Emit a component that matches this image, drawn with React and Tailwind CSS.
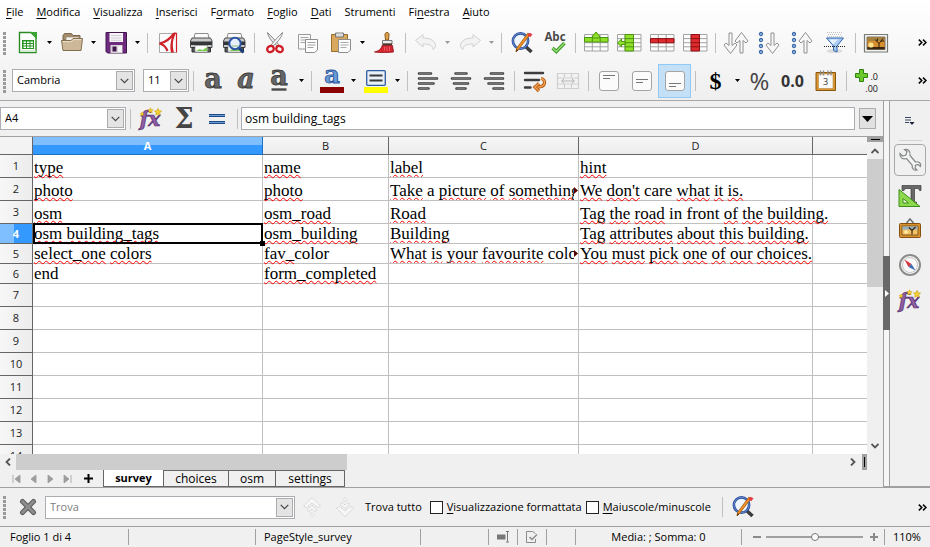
import React from "react";

/* ---------- drawing helpers ---------- */

function Svg({ children, className = "h-6 w-6", box = "0 0 24 24" }) {
  return (
    <svg viewBox={box} className={`shrink-0 overflow-visible ${className}`} fill="none" aria-hidden="true">
      {children}
    </svg>
  );
}

const Calc = () => (
  <Svg>
    <path d="M3.500 1.500H15l5 5v15H3.500z" fill="#fff" stroke="#2c8a27" strokeWidth="1.400" />
    <path d="M4.500 19h15v2h-15z" fill="#d6ecd2" />
    <path d="M14 1h7v7z" fill="#3aa535" />
    <path d="M6 9h12v9H6z" fill="#24951f" />
    <path d="M7.500 10.500h2.500v1.600H7.500zM11 10.500h2.500v1.600H11zM14.500 10.500H17v1.600h-2.500zM7.500 13h2.500v1.500H7.500zM11 13h2.500v1.500H11zM14.500 13H17v1.500h-2.500zM7.500 15.400h2.500V17H7.500zM11 15.400h2.500V17H11zM14.500 15.400H17V17h-2.500z" fill="#fff" />
  </Svg>
);
const Folder = () => (
  <Svg>
    <path d="M3 4.500 4.500 2.500h7L13 4.500h7V9H3z" fill="#a48d6c" stroke="#7c684d" />
    <path d="M6 6h13v4H6z" fill="#f6f3ee" stroke="#9b8a72" strokeWidth=".7" />
    <path d="M1.500 9.500H11l2-2h9.500L21 19.500H3z" fill="#cdb999" stroke="#84704f" />
    <path d="M2.800 10.600h8.800l2-2h7.700" stroke="#eadfc9" />
  </Svg>
);
const Save = () => (
  <Svg>
    <path d="M2 1.500h20.500v20.500H3.500L2 20.500z" fill="#6c2b7c" stroke="#42154e" />
    <path d="M5.500 2h13.500v9H5.500z" fill="#f7f5f8" />
    <path d="M7 4.500h10.500M7 7h10.500M7 9.300h10.500" stroke="#c7c3ca" strokeWidth=".8" />
    <path d="M6.500 14h12v8h-12z" fill="#d9d6da" />
    <path d="M8.500 15.500h4v5h-4z" fill="#42154e" />
    <path d="M14 15h4v6h-4z" fill="#f4f4f4" />
  </Svg>
);
const Pdf = () => (
  <Svg>
    <path d="M3.500 2.500h17v19h-17z" fill="#fbfbfb" stroke="#a9a9a9" />
    <path d="M18 2.500C14 8 9 11.500 3.500 12.500c4 1 6.500 3.500 8 7.500" stroke="#cf2027" strokeWidth="2.200" />
    <path d="M20.500 1.500c-4 6-4.500 13-2.500 20h-3c-1.500-7 0-14 3-20z" fill="#cf2027" />
    <path d="M20.500 2v19.500" stroke="#cf2027" strokeWidth="1.200" />
  </Svg>
);
const PrinterShape = () => (
  <>
    <path d="M6 2.500h13l1 5H5z" fill="#fbfbfb" stroke="#8d8d8d" />
    <path d="M3 7h18.500l1.500 3v6.500H1.500V10z" fill="#c9c9c9" stroke="#4e4e4e" />
    <path d="M1.500 10.500H23v3.500H1.500z" fill="#34373a" />
    <path d="M3 16.500h18.500v4.500H3z" fill="#55595c" stroke="#2e3133" />
    <path d="M6 14.500h12.500v6.500H6z" fill="#fdfdfd" stroke="#7b7b7b" strokeWidth=".6" />
    <path d="m7 20 3.500-2 3 1 4.500-3v4z" fill="#7ccf4d" />
  </>
);
const Print = () => <Svg><PrinterShape /></Svg>;
const Preview = () => (
  <Svg>
    <PrinterShape />
    <path d="m16.500 16.500 5 5" stroke="#1c3e7d" strokeWidth="2.600" />
    <circle cx="13" cy="12.500" r="5.700" fill="#e6f0fa" stroke="#2d55a5" strokeWidth="2" />
    <path d="M9.500 15h7" stroke="#8abf7c" />
  </Svg>
);
const Scissors = () => (
  <Svg>
    <path d="M4.500 1.500c.500 4 4 9 9.500 13.500l1.500-1.500C12 9 8 5 4.500 1.500z" fill="#e6e6e6" stroke="#7d7d7d" strokeWidth=".9" />
    <path d="M19.500 1.500c-.5 4-4 9-9.500 13.500l-1.500-1.500C12 9 16 5 19.500 1.500z" fill="#f6f6f6" stroke="#7d7d7d" strokeWidth=".9" />
    <ellipse cx="7.500" cy="18" rx="3.400" ry="3" stroke="#cf1b24" strokeWidth="2.300" transform="rotate(-30 7.500 18)" />
    <ellipse cx="16.500" cy="18" rx="3.400" ry="3" stroke="#cf1b24" strokeWidth="2.300" transform="rotate(30 16.500 18)" />
  </Svg>
);
const Copy = () => (
  <Svg>
    <path d="M2.500 3.500h12v12l-2 2.500h-10z" fill="#fafafa" stroke="#9b9b9b" />
    <path d="M4.500 6.500h8M4.500 9h8M4.500 11.500h8" stroke="#a8a8a8" />
    <path d="M9.500 8.500h12V19l-3 2.500h-9z" fill="#fff" stroke="#8d8d8d" />
    <path d="M11.500 11.500h8M11.500 14h8M11.500 16.500h6" stroke="#a0a0a0" />
  </Svg>
);
const Paste = () => (
  <Svg>
    <path d="M2.500 3.500h16v17h-16z" fill="#d9a85c" stroke="#9a6e2c" />
    <path d="M6.500 2h8v4h-8z" fill="#dcdcdc" stroke="#777" />
    <path d="M8.500 1h4v2h-4z" fill="#bcbcbc" />
    <path d="M9.500 8.500h12V19l-2.500 2.500H9.500z" fill="#fbfbfb" stroke="#8c8c8c" />
    <path d="M11.500 11.500h8M11.500 14h8M11.500 16.500h6" stroke="#aaa" />
  </Svg>
);
const Brush = () => (
  <Svg>
    <path d="M14 1.500c1.500 0 2.200 1.200 2 2.500L15.500 9h-3L12 4c-.2-1.300.5-2.500 2-2.500z" fill="#dfa04a" stroke="#8b5a1b" />
    <path d="M9.500 9.500h9.500v3.500H9.500z" fill="#ececec" stroke="#777" />
    <path d="M9.500 12.500H19v1.800H9.500z" fill="#4b3b2b" />
    <path d="M9 14.500h10.500l1 6.500c-6 .5-12 1-19 0 4-1 7-3 7.500-6.500z" fill="#d5242e" stroke="#8b1219" strokeWidth=".8" />
    <path d="M11.500 15.500v4M14 15.500v4.500M16.500 15.500v4.500" stroke="#ef6b72" strokeWidth=".8" />
  </Svg>
);
const UndoPath = () => <path d="M1.500 9.500 9 3.500v3.500c7 0 12.500 2.500 12.500 8-.5 2-1.500 3-2.500 3.500 0-3.500-3.500-5.500-10-5.500v3z" fill="#f3f3f3" stroke="#d2d2d2" />;
const Undo = () => <Svg><UndoPath /></Svg>;
const Redo = () => (
  <Svg>
    <g transform="matrix(-1 0 0 1 24 0)"><UndoPath /></g>
  </Svg>
);
const FindReplace = () => (
  <Svg>
    <path d="m15 15 6.500 6" stroke="#3c3c3c" strokeWidth="3.600" />
    <circle cx="10.500" cy="10" r="7.600" fill="#eef5fc" stroke="#2b4f9e" strokeWidth="2.600" />
    <circle cx="10.500" cy="10" r="7.600" stroke="#7ea3dd" strokeWidth=".7" />
    <path d="M20 3.500 8.500 18.500 6 21l.7-3.800L17.800 2.200z" fill="#f2942a" stroke="#a85a10" strokeWidth=".9" />
    <path d="m17.500 4.500 2-2.800 3 1.600-2.200 3z" fill="#e33b45" />
    <path d="m6 21 .7-3 1.600 1.200z" fill="#4a2b0c" />
  </Svg>
);
const Spell = () => (
  <Svg>
    <text x="12" y="10" fontSize="11.500" textAnchor="middle" fontWeight="700" fill="#4a4a4a" fontFamily="'Open Sans', sans-serif">Abc</text>
    <path d="m9.500 17 3.800 3.500L21.500 12" stroke="#3f9a2a" strokeWidth="3.400" />
    <path d="m9.500 17 3.800 3.500L21.500 12" stroke="#93dc74" strokeWidth="1.400" />
  </Svg>
);
function GridBase() {
  return (
    <path d="M.5 3.500h23.500v16.500H.5zM.5 7.600H24M.5 11.700H24M.5 15.800H24M8.300 3.500V20M16.200 3.500V20" fill="#fdfdfd" stroke="#a3a3a3" />
  );
}
const RowIns = () => (
  <Svg>
    <GridBase />
    <path d="M.5 6.500H24V11H.5z" fill="#8fdf2b" stroke="#4a9410" />
    <path d="m12 1 3.500 4v2h-7V5z" fill="#8fdf2b" stroke="#4a9410" />
    <path d="M8.300 7v4M16.200 7v4" stroke="#4a9410" />
  </Svg>
);
const ColIns = () => (
  <Svg>
    <GridBase />
    <path d="M8 3.500h8.500V20H8z" fill="#8fdf2b" stroke="#4a9410" />
    <path d="m.5 12 4-4v2.500H8v3H4.500V16z" fill="#8fdf2b" stroke="#4a9410" />
    <path d="M8 7.600h8.500M8 11.700h8.500M8 15.800h8.500" stroke="#4a9410" />
  </Svg>
);
const RowDel = () => (
  <Svg>
    <GridBase />
    <path d="M.5 7.600H24v4.200H.5z" fill="#df2a2f" stroke="#8e1013" />
    <path d="M8.300 7.600v4M16.200 7.600v4" stroke="#8e1013" />
  </Svg>
);
const ColDel = () => (
  <Svg>
    <GridBase />
    <path d="M8 3.500h8.500V20H8z" fill="#df2a2f" stroke="#8e1013" />
    <path d="M8 7.600h8.500M8 11.700h8.500M8 15.800h8.500" stroke="#8e1013" />
  </Svg>
);
const downArrow = "M-1.500 0h3v12.500l3-2.500 2 2L0 20.500-6.500 12l2-2 3 2.500z";
const upArrow = "M-1.500 20.500h3V8l3 2.500 2-2L0 0l-6.500 8.500 2 2 3-2.500z";
const Sort = () => (
  <Svg>
    <path d={downArrow} transform="translate(6.500 2)" fill="#f8f8f8" stroke="#909090" />
    <path d={upArrow} transform="translate(17.500 1.500)" fill="#f8f8f8" stroke="#909090" />
  </Svg>
);
function Dots() {
  return (
    <g fill="#dce8f8" stroke="#3566a8" strokeWidth="1.300">
      <circle cx="4" cy="3" r="1.500" /><circle cx="4" cy="9" r="1.500" />
      <circle cx="4" cy="15" r="1.500" /><circle cx="4" cy="21" r="1.500" />
    </g>
  );
}
const SortAsc = () => <Svg><Dots /><path d={downArrow} transform="translate(15.500 2)" fill="#f8f8f8" stroke="#909090" /></Svg>;
const SortDesc = () => <Svg><Dots /><path d={upArrow} transform="translate(15.500 1.500)" fill="#f8f8f8" stroke="#909090" /></Svg>;
const Funnel = () => (
  <Svg>
    <path d="M4 1.500h15M5 3.500h14M4 5.500h15" stroke="#c2c2c2" strokeDasharray="1 1" />
    <ellipse cx="11.500" cy="20" rx="8" ry="2" fill="#dcdcdc" />
    <path d="M3.500 7h17l-6.500 8v6l-3.500-1.500V15z" fill="#a9cdf3" stroke="#2f66ac" />
    <path d="M6 8.500h9l-5 5z" fill="#e9f3fd" />
    <path d="M1 15.500h22" stroke="#222" strokeDasharray="1 1" />
  </Svg>
);
const PictureIcon = () => (
  <Svg>
    <path d="M.5 3.500h23v17.500H.5z" fill="#f4f4f2" stroke="#777a75" strokeWidth="1.200" />
    <path d="M3 6h18v12.500H3z" fill="#d78e2e" stroke="#555" strokeWidth=".8" />
    <path d="M3.400 6.400h17.200v3.600H3.400z" fill="#a5823e" />
    <path d="M3.400 16h17.200v2.200H3.400z" fill="#3b2510" />
    <circle cx="7" cy="14" r="2.600" fill="#ffe38a" />
    <path d="M15 17.500v-5l-4-4M15 12.500l4-5M17 10l3 0M13 10.500l.5-3" stroke="#2a1b0b" strokeWidth="1" />
  </Svg>
);

function LetterA({ variant }) {
  const italic = variant === "italic";
  return (
    <Svg>
      <text x="11" y={variant === "under" ? 16 : 19} fontSize="27" textAnchor="middle" fontWeight="700" fontStyle={italic ? "italic" : "normal"} fill="#666" stroke="#3a3a3a" strokeWidth=".8" fontFamily="'DejaVu Serif', serif">a</text>
      {variant === "under" && <path d="M3.500 20.500h15" stroke="#4a4a4a" strokeWidth="2.400" />}
    </Svg>
  );
}
const FontColor = () => (
  <Svg className="h-7 w-6" box="0 0 24 28">
    <text x="12" y="16" fontSize="24" textAnchor="middle" fontWeight="700" fill="#6a9bd8" stroke="#27549b" strokeWidth=".9" fontFamily="'DejaVu Serif', serif">a</text>
    <path d="M0 20h24v6H0z" fill="#8b0000" />
  </Svg>
);
const Highlight = () => (
  <Svg className="h-7 w-6" box="0 0 24 28">
    <rect x="2.700" y="3.700" width="18.600" height="14.600" rx="1" fill="#e8f0fa" stroke="#2f5c9f" strokeWidth="1.300" />
    <path d="M5.500 8.500h13M5.500 13.500h13" stroke="#3a3a3a" strokeWidth="2.200" />
    <path d="M0 20h24v6H0z" fill="#ffff00" />
  </Svg>
);
function Align({ d }) {
  return (
    <Svg>
      <path d={d} stroke="#3d3d3d" strokeWidth="2.600" strokeLinecap="round" />
      <path d={d} stroke="#8b8b8b" strokeWidth=".7" />
    </Svg>
  );
}
const AlignL = () => <Align d="M3 4.500h12M3 9.500h18M3 14.500h14.500M3 19.500h9.500" />;
const AlignC = () => <Align d="M6.500 4.500h11M3 9.500h18M5 14.500h14M7.500 19.500h9" />;
const AlignR = () => <Align d="M9 4.500h12M3 9.500h18M6.500 14.500H21M11.500 19.500H21" />;
const Wrap = () => (
  <Svg>
    <path d="M2 4h18M2 11h14M2 18.500h5.500" stroke="#3d3d3d" strokeWidth="2.400" strokeLinecap="round" />
    <path d="M18 9.500c5 1 5.500 8.500-3.500 8.500M16 14.500 12 18l4 4" stroke="#b4570f" strokeWidth="3.200" />
    <path d="M18 9.500c5 1 5.500 8.500-3.500 8.500M16 14.500 12 18l4 4" stroke="#f5a456" strokeWidth="1.400" />
  </Svg>
);
const Merge = () => (
  <Svg>
    <path d="M1.500 4.500h21v15h-21zM1.500 9h21M1.500 15h21M8.500 4.500V9M15.500 4.500V9M8.500 15v4.500M15.500 15v4.500" fill="#f2f2f2" stroke="#cfcfcf" strokeWidth="1.200" />
    <path d="M6 12h12M8 10l-2.500 2L8 14M16 10l2.500 2-2.500 2" stroke="#b4b4b4" />
  </Svg>
);
function Valign({ y }) {
  return (
    <Svg>
      <rect x="2.500" y="2.500" width="19" height="19" rx="2.500" fill="#fbfbfb" stroke="#a4a4a4" />
      <path d={`M6 ${y}h12M6 ${y + 3}h7`} stroke="#777" />
    </Svg>
  );
}
const CalendarIcon = () => (
  <Svg>
    <path d="M2 3.500h19.500v18H2z" fill="#d9952f" stroke="#8a5710" />
    <path d="M4.500 5h14.500v14.500H4.500z" fill="#fafafa" stroke="#b98a44" strokeWidth=".6" />
    <path d="M6.500 1.500v5M9.500 1.500v5M14 1.500v5M17 1.500v5" stroke="#8c8c8c" strokeWidth="1.300" />
    <text x="11.500" y="16" fontSize="9" textAnchor="middle" fill="#333" fontFamily="'Open Sans', sans-serif">3</text>
  </Svg>
);
const AddDecimal = () => (
  <Svg>
    <path d="M4.500.5h4v4h4v4h-4v4h-4v-4h-4v-4h4z" fill="#6bc92b" stroke="#2f8411" />
    <text x="23" y="11" fontSize="9" textAnchor="end" fill="#111" fontFamily="'Open Sans', sans-serif">.0</text>
    <text x="23" y="23" fontSize="9" textAnchor="end" fill="#111" fontFamily="'Open Sans', sans-serif">.00</text>
  </Svg>
);
const star = "m0-3 .9 2 2.100.2-1.600 1.400.5 2.100L0 1.600l-1.900 1.100.5-2.100L-3-.8l2.100-.2z";
const Fx = () => (
  <Svg>
    <text x="11" y="19" fontSize="20" textAnchor="middle" fontWeight="700" fontStyle="italic" fill="#8d5fa3" stroke="#54296b" strokeWidth=".7" fontFamily="'DejaVu Serif', serif">fx</text>
    <path d={star} transform="translate(3 7) scale(.7)" fill="#f6d331" stroke="#c99b0c" strokeWidth=".5" />
    <path d={star} transform="translate(11.500 3.500) scale(.9)" fill="#f6d331" stroke="#c99b0c" strokeWidth=".5" />
    <path d={star} transform="translate(19 5) scale(1.200)" fill="#f6d331" stroke="#c99b0c" strokeWidth=".5" />
  </Svg>
);
const Sigma = () => (
  <Svg>
    <text x="12" y="21" fontSize="27" textAnchor="middle" fontWeight="700" fill="#454545" fontFamily="'DejaVu Serif', serif">Σ</text>
  </Svg>
);
const Equals = () => (
  <Svg>
    <path d="M4 8.500h16M4 15.500h16" stroke="#1f4a86" strokeWidth="3" />
    <path d="M4 8.500h16M4 15.500h16" stroke="#6b9bd6" strokeWidth="1.200" />
  </Svg>
);
const WrenchIcon = () => (
  <Svg>
    <path d="M2 5.500 4.500 8 8 7l1-3.500L6.500 1.500c3-.8 6.500 1.500 5.500 6l5.500 6.500c3.500-1 6 1.500 5 4.500l-2.500-2-2.500.8-.5 2.700 2 2c-3 .8-5.500-1.500-4.700-4.700L8.500 10.500C4.500 12 1.500 9 2 5.500z" fill="#f4f4f2" stroke="#85888a" strokeWidth="1.200" />
  </Svg>
);
const Styles = () => (
  <Svg>
    <path d="M4 1.500h19v5h-1.500l-1-2h-4V18h2v2H11v-2h2V4.500H7l-1 2H4z" fill="#686868" stroke="#3e3e3e" strokeWidth=".7" />
    <path d="M1 5.500 22 22.500H1z" fill="#8dd94e" stroke="#3e8d16" />
    <path d="M5 14.500 10.500 19H5z" fill="#eef8e6" stroke="#3e8d16" />
  </Svg>
);
const Gallery = () => (
  <Svg>
    <path d="m8.500 6 3.500-4 3.500 4" stroke="#6f6f6f" strokeWidth="1.500" />
    <rect x="1.500" y="6.500" width="21" height="14" rx="1" fill="#d9922f" stroke="#84500f" />
    <path d="M4 9h16v9H4z" fill="#f3c266" stroke="#5d3a0a" strokeWidth=".7" />
    <path d="M4.500 9.500h15v3h-15z" fill="#8fb0c6" />
    <path d="M14 17.500v-4l-3-3M14 13.500l3.500-3.500" stroke="#3b2308" strokeWidth="1.200" />
    <circle cx="8" cy="15" r="1.800" fill="#fff0a6" />
  </Svg>
);
const Compass = () => (
  <Svg>
    <circle cx="12" cy="12" r="10" fill="#fafafa" stroke="#8b8d8a" strokeWidth="2" />
    <circle cx="12" cy="12" r="7.500" stroke="#c2c4c0" />
    <path d="m6.500 6.500 7 4.500-3 3z" fill="#d6353c" />
    <path d="m17.500 17.500-4-6.500-3 3z" fill="#3f6db5" />
  </Svg>
);
const Cross = () => (
  <Svg className="h-5 w-5" box="0 0 20 20">
    <path d="m4.500 4.500 11 11m0-11-11 11" stroke="#5f5f5f" strokeWidth="5" strokeLinecap="round" />
    <path d="m4.500 4.500 11 11m0-11-11 11" stroke="#8d8d8d" strokeWidth="2.800" strokeLinecap="round" />
  </Svg>
);
const FindArrow = () => (
  <path d="m12 2.500 8.500 8.500-3 1.500L12 8l-5.500 4.500-3-1.500zM12 10.500l5 4.500-2 1.500-3-2.500-3 2.500L7 15zM12 17.500l2 2-2 2-2-2z" fill="#f7f7f7" stroke="#cecece" strokeDasharray="1.500 .7" />
);
const FindUp = () => <Svg><FindArrow /></Svg>;
const FindDown = () => <Svg><g transform="matrix(1 0 0 -1 0 24)"><FindArrow /></g></Svg>;

/* ---------- small controls ---------- */

const Grip = () => (
  <span className="flex h-6 w-[11px] shrink-0 items-center pl-[3px]" aria-hidden="true">
    <svg className="h-6 w-[3px]" viewBox="0 0 3 24"><path d="M1.500 1v23" stroke="#9a9a9a" strokeWidth="3" strokeDasharray="3 1" /></svg>
  </span>
);
const Sep = () => (
  <span className="flex w-2 shrink-0 justify-center" aria-hidden="true"><span className="h-5 w-px bg-[#c0c0c0]" /></span>
);
function Tool({ label, children, active }) {
  return (
    <button type="button" aria-label={label} className={`flex h-[34px] w-[33px] shrink-0 items-center justify-center border ${active ? "border-[#90c8f6] bg-[#c4e0f6]" : "border-transparent"}`}>
      {children}
    </button>
  );
}
function Drop({ label, dim }) {
  return (
    <button type="button" aria-label={label} className="flex h-[34px] w-[11px] shrink-0 items-center justify-center">
      <svg className="h-[3px] w-[5px]" viewBox="0 0 5 3"><path d="M0 0h5L2.500 3z" fill={dim ? "#9a9a9a" : "#000"} /></svg>
    </button>
  );
}
function Combo({ label, value, className, dim }) {
  return (
    <div className={`flex h-[23px] shrink-0 items-stretch border border-[#abadb3] bg-white p-px ${className}`}>
      <select aria-label={label} defaultValue={value} className={`min-w-0 flex-1 appearance-none bg-transparent pl-[3px] outline-none ${dim ? "text-[#7d7d7d]" : ""}`}>
        <option>{value}</option>
      </select>
      <span className="flex w-[17px] items-center justify-center border border-[#acacac] bg-[#e4e4e4]" aria-hidden="true">
        <svg className="h-[6px] w-[9px]" viewBox="0 0 9 6"><path d="m.7.8 3.800 3.800L8.300.8" fill="none" stroke="#444" strokeWidth="1.200" /></svg>
      </span>
    </div>
  );
}
const Chevrons = () => (
  <button type="button" aria-label="Altri comandi" className="ml-auto flex h-6 w-4 shrink-0 items-center justify-center">
    <svg className="h-[7px] w-[9px]" viewBox="0 0 9 7"><path d="m.8.600 3 2.900-3 2.900M5 .6l3 2.900-3 2.900" fill="none" stroke="#000" strokeWidth="1.500" /></svg>
  </button>
);
function ScrollArrow({ d, label, className }) {
  return (
    <button type="button" aria-label={label} className={`flex shrink-0 items-center justify-center ${className}`}>
      <svg className="h-2 w-2" viewBox="0 0 8 8"><path d={d} fill="none" stroke="#555" strokeWidth="1.800" /></svg>
    </button>
  );
}

/* ---------- sheet data ---------- */

// Words wrapped in [ ] carry the spelling mark.
const rows = [
  { h: "h-[23px]", cells: ["[type]", "[name]", "[label]", "[hint]"] },
  { h: "h-[23px]", cells: ["[photo]", "[photo]", "[Take] a [picture] [of] [something]", "[We] [don't] care [what] [it] [is.]"], cut: true },
  { h: "h-[23px]", cells: ["[osm]", "[osm_road]", "[Road]", "[Tag] [the] [road] in front [of] [the] [building.]"] },
  { h: "h-[20px]", cells: ["[osm] [building_tags]", "[osm_building]", "[Building]", "[Tag] [attributes] [about] [this] [building.]"] },
  { h: "h-[20px]", cells: ["[select_one] [colors]", "[fav_]color", "[What] [is] [your] [favourite] color", "[You] [must] [pick] [one] [of] [our] [choices.]"], cut: true },
  { h: "h-[20px]", cells: ["end", "[form_completed]", "", ""] },
  ...Array.from({ length: 8 }, () => ({ h: "h-[23px]", cells: ["", "", "", ""] })),
];

function Marked({ text }) {
  return text.split(/(\[[^\]]*\])/).filter(Boolean).map((part, i) =>
    part[0] === "[" ? (
      <span key={i} className="underline decoration-[#f00] decoration-wavy decoration-1 underline-offset-1 [text-decoration-skip-ink:none]">{part.slice(1, -1)}</span>
    ) : (
      <React.Fragment key={i}>{part}</React.Fragment>
    )
  );
}

function Sheet() {
  return (
    <div className="min-h-0 min-w-0 flex-1 overflow-hidden bg-white">
      <table className="w-full table-fixed border-separate border-spacing-0">
        <colgroup>
          <col className="w-[33px]" /><col className="w-[230px]" /><col className="w-[126px]" /><col className="w-[190px]" /><col className="w-[234px]" /><col />
        </colgroup>
        <thead>
          <tr className="h-[18px]">
            <th className="border-r border-b border-[#666] bg-[#f3f3f3] p-0" aria-label="Seleziona tutto" />
            {["A", "B", "C", "D", ""].map((c, i) => (
              <th key={i} scope="col" className={`border-b p-0 leading-[17px] ${i === 0 ? "border-r border-[#1f6fc4] bg-linear-to-b from-[#80bfff] from-45% to-[#3399ff] to-45% font-bold text-white" : "border-[#666] bg-linear-to-b from-[#f7f7f7] to-[#ececec] font-normal text-[#222]"} ${i > 0 && i < 4 ? "border-r" : ""}`}>{c}</th>
            ))}
          </tr>
        </thead>
        <tbody>
          {rows.map((r, ri) => (
            <tr key={ri} className={r.h}>
              <th scope="row" className={`border-r border-b border-[#666] p-0 leading-[18px] ${ri === 3 ? "bg-linear-to-r from-[#80bfff] from-45% to-[#3399ff] to-45% font-bold text-white" : "bg-linear-to-r from-[#f7f7f7] to-[#ececec] font-normal text-[#222]"}`}>{ri + 1}</th>
              {r.cells.map((c, ci) => (
                <td key={ci} className={`relative border-b border-[#c0c0c0] p-0 align-bottom font-['Liberation_Serif',serif] text-[17px] leading-[18px] text-black ${ri === 2 && ci === 3 ? "" : "border-r"}`}>
                  <div className={`flex items-center pl-px whitespace-nowrap ${ci === 2 ? "h-[19px] overflow-hidden" : ""}`}>
                    <span className={ci === 2 && r.cut ? "min-w-0 flex-1 overflow-hidden" : ""}><Marked text={c} /></span>
                    {ci === 2 && r.cut && (
                      <svg className="h-[7px] w-1 shrink-0" viewBox="0 0 4 7" aria-hidden="true"><path d="M0 0v7l4-3.500z" fill="#500" /></svg>
                    )}
                  </div>
                  {ri === 3 && ci === 0 && (
                    <>
                      <span className="absolute -top-px -right-px -bottom-px left-0 border-2 border-black" />
                      <span className="absolute -right-[3px] -bottom-[3px] z-10 h-[5px] w-[5px] bg-black" />
                    </>
                  )}
                </td>
              ))}
              <td className="border-b border-[#c0c0c0] p-0" />
            </tr>
          ))}
        </tbody>
      </table>
    </div>
  );
}

const menus = [["", "F", "ile"], ["", "M", "odifica"], ["", "V", "isualizza"], ["", "I", "nserisci"], ["F", "o", "rmato"], ["", "F", "oglio"], ["", "D", "ati"], ["Strumenti", "", ""], ["Fi", "n", "estra"], ["", "A", "iuto"]];

const tabNav = ["M2 1v8M9 1v8L4 5z", "M8 1v8L3 5z", "M3 1v8l5-4z", "M2 1v8l5-4zM9 1v8"];

function Tick({ id, first, rest }) {
  return (
    <div className="flex items-center gap-1">
      <input id={id} type="checkbox" className="h-[13px] w-[13px] shrink-0 appearance-none border border-[#222] bg-white" />
      <label htmlFor={id} className="whitespace-nowrap"><span className="underline underline-offset-2">{first}</span>{rest}</label>
    </div>
  );
}
const StatusSep = () => <span className="h-4 w-px shrink-0 bg-[#a0a0a0]" aria-hidden="true" />;

export default function App() {
  return (
    <div className="flex h-screen flex-col overflow-hidden bg-[#f0f0f0] font-['Open_Sans',sans-serif] text-[11px] text-black">
      <header className="flex shrink-0 flex-col border-b border-[#a8a8a8] bg-linear-to-b from-white to-[#efefef]">
        <nav aria-label="Menu" className="flex h-6 items-center gap-px">
          {menus.map(([a, u, b]) => (
            <button type="button" key={a + u + b} className="px-1.5">{a}<span className="underline underline-offset-2">{u}</span>{b}</button>
          ))}
        </nav>

        <div role="toolbar" aria-label="Standard" className="flex h-[37px] items-center">
          <Grip />
          <Tool label="Nuovo"><Calc /></Tool><Drop label="Opzioni nuovo" />
          <Tool label="Apri"><Folder /></Tool><Drop label="Opzioni apri" />
          <Tool label="Salva"><Save /></Tool><Drop label="Opzioni salva" />
          <Sep />
          <Tool label="Esporta PDF"><Pdf /></Tool><Tool label="Stampa"><Print /></Tool><Tool label="Anteprima"><Preview /></Tool>
          <Sep />
          <Tool label="Taglia"><Scissors /></Tool><Tool label="Copia"><Copy /></Tool><Tool label="Incolla"><Paste /></Tool><Drop label="Opzioni incolla" />
          <Tool label="Copia formato"><Brush /></Tool>
          <Sep />
          <Tool label="Annulla"><Undo /></Tool><Drop label="Opzioni annulla" dim />
          <Tool label="Ripristina"><Redo /></Tool><Drop label="Opzioni ripristina" dim />
          <Sep />
          <Tool label="Trova e sostituisci"><FindReplace /></Tool><Tool label="Controllo ortografico"><Spell /></Tool>
          <Sep />
          <Tool label="Inserisci riga"><RowIns /></Tool><Tool label="Inserisci colonna"><ColIns /></Tool><Tool label="Elimina riga"><RowDel /></Tool><Tool label="Elimina colonna"><ColDel /></Tool>
          <Sep />
          <Tool label="Ordina"><Sort /></Tool><Tool label="Ordine crescente"><SortAsc /></Tool><Tool label="Ordine decrescente"><SortDesc /></Tool><Tool label="Filtro"><Funnel /></Tool>
          <Sep />
          <Tool label="Immagine"><PictureIcon /></Tool>
          <Chevrons />
        </div>

        <div role="toolbar" aria-label="Formattazione" className="flex h-[39px] items-center">
          <Grip />
          <Combo label="Nome carattere" value="Cambria" className="ml-px w-[123px]" />
          <Combo label="Dimensione" value="11" className="ml-2 w-[46px]" />
          <Sep />
          <Tool label="Grassetto"><LetterA /></Tool><Tool label="Corsivo"><LetterA variant="italic" /></Tool><Tool label="Sottolineato"><LetterA variant="under" /></Tool><Drop label="Opzioni sottolineato" />
          <Sep />
          <Tool label="Colore carattere"><FontColor /></Tool><Drop label="Opzioni colore" />
          <Tool label="Evidenziazione"><Highlight /></Tool><Drop label="Opzioni evidenziazione" />
          <Sep />
          <Tool label="Sinistra"><AlignL /></Tool><Tool label="Centro"><AlignC /></Tool><Tool label="Destra"><AlignR /></Tool>
          <Sep />
          <Tool label="Testo a capo"><Wrap /></Tool><Tool label="Unisci celle"><Merge /></Tool>
          <Sep />
          <Tool label="In alto"><Valign y={6.5} /></Tool><Tool label="Al centro"><Valign y={10.5} /></Tool><Tool label="In basso" active><Valign y={14.5} /></Tool>
          <Sep />
          <Tool label="Valuta"><span className="font-['Liberation_Serif',serif] text-2xl font-bold">$</span></Tool><Drop label="Opzioni valuta" />
          <Tool label="Percentuale"><span className="text-2xl text-[#444]">%</span></Tool>
          <Tool label="Numero"><span className="text-base font-bold text-[#333]">0.0</span></Tool>
          <Tool label="Data"><CalendarIcon /></Tool>
          <Sep />
          <Tool label="Aggiungi decimale"><AddDecimal /></Tool>
          <Chevrons />
        </div>
      </header>

      <div className="flex min-h-0 flex-1">
        <main className="flex min-w-0 flex-1 flex-col">
          <div className="flex h-9 shrink-0 items-center border-b border-[#a0a0a0] pr-[7px]">
            <Combo label="Casella nome" value="A4" className="w-[126px]" />
            <Sep />
            <Tool label="Creazione guidata funzione"><Fx /></Tool><Tool label="Somma"><Sigma /></Tool><Tool label="Funzione"><Equals /></Tool>
            <Sep />
            <input aria-label="Riga di immissione" defaultValue="osm building_tags" className="h-[23px] min-w-0 flex-1 border border-[#abadb3] bg-white px-[3px] text-xs outline-none" />
            <button type="button" aria-label="Espandi" className="ml-1 flex h-[21px] w-[17px] items-center justify-center border border-[#acacac] bg-[#e1e1e1]">
              <svg className="h-[6px] w-[11px]" viewBox="0 0 11 6"><path d="M0 0h11L5.500 6z" fill="#000" /></svg>
            </button>
          </div>

          <div className="flex min-h-0 flex-1">
            <Sheet />
            <div className="flex w-4 shrink-0 flex-col" aria-label="Scorrimento verticale">
              <div className="flex h-[5px] shrink-0 items-center justify-center bg-[#a0a0a0]"><span className="h-px w-[9px] bg-black" /></div>
              <ScrollArrow label="Su" d="M.5 6 4 2.500 7.500 6" className="h-[17px] w-4" />
              <div className="h-32 shrink-0 bg-[#cdcdcd]" />
              <ScrollArrow label="Giù" d="M.5 2 4 5.500 7.500 2" className="mt-auto h-[17px] w-4" />
            </div>
          </div>

          <div className="flex h-4 shrink-0 items-center pr-4" aria-label="Scorrimento orizzontale">
            <ScrollArrow label="Sinistra" d="M6 .5 2.500 4 6 7.500" className="h-4 w-4" />
            <div className="h-4 w-[331px] bg-[#cdcdcd]" />
            <ScrollArrow label="Destra" d="M2 .5 5.500 4 2 7.500" className="ml-auto h-4 w-4" />
            <div className="ml-px flex h-4 w-[5px] items-center justify-center bg-[#a0a0a0]"><span className="h-2.5 w-px bg-black" /></div>
          </div>

          <div className="flex h-[17px] shrink-0 items-stretch pl-[7px]">
            {tabNav.map((d, i) => (
              <button type="button" key={i} aria-label={`Scorri fogli ${i + 1}`} className="flex w-[17px] items-center justify-center">
                <svg className="h-2.5 w-2.5" viewBox="0 0 10 10"><path d={d} fill="#9c9c9c" stroke="#9c9c9c" strokeWidth=".8" /></svg>
              </button>
            ))}
            <button type="button" aria-label="Aggiungi foglio" className="ml-1 flex w-[18px] items-center justify-center">
              <svg className="h-[9px] w-[9px]" viewBox="0 0 9 9"><path d="M4.500 0v9M0 4.500h9" stroke="#000" strokeWidth="2" /></svg>
            </button>
            <div role="tablist" className="ml-1.5 flex items-stretch text-xs leading-4">
              <button role="tab" type="button" aria-selected="true" className="w-[61px] border-r border-b border-l border-[#666] bg-white text-[11px] font-bold">survey</button>
              <button role="tab" type="button" aria-selected="false" className="w-[65px] border-t border-r border-b border-[#666]">choices</button>
              <button role="tab" type="button" aria-selected="false" className="w-[47px] border-t border-r border-b border-[#666]">osm</button>
              <button role="tab" type="button" aria-selected="false" className="w-[69px] border-t border-r border-b border-[#666]">settings</button>
            </div>
          </div>
        </main>

        <aside className="flex shrink-0 border-b border-[#a0a0a0]">
          <div className="flex w-[7px] flex-col border-r border-l border-[#a0a0a0] bg-[#f6f6f6]">
            <div className="h-[155px] shrink-0" />
            <button type="button" aria-label="Nascondi barra laterale" className="-mx-px flex h-[74px] w-[7px] items-center justify-center bg-[#686868]">
              <svg className="h-[7px] w-1" viewBox="0 0 4 7"><path d="M0 0v7l4-3.500z" fill="#fff" /></svg>
            </button>
          </div>
          <div className="flex w-10 flex-col items-center pt-2">
            <button type="button" aria-label="Impostazioni barra laterale" className="flex h-6 w-8 items-center justify-center">
              <svg className="h-[10px] w-[10px]" viewBox="0 0 10 10"><path d="M0 1.500h6M0 4h6M0 6.500h4" stroke="#3a4a66" /><path d="M4.500 6h5L7 9z" fill="#16203a" /></svg>
            </button>
            <span className="mt-[7px] h-px w-[23px] bg-[#d4d4d4]" />
            <button type="button" aria-label="Proprietà" className="mt-[3px] flex h-8 w-8 items-center justify-center rounded border border-[#a8a8a8]"><WrenchIcon /></button>
            <button type="button" aria-label="Stili" className="mt-1 flex h-8 w-8 items-center justify-center"><Styles /></button>
            <button type="button" aria-label="Galleria" className="mt-px flex h-8 w-8 items-center justify-center"><Gallery /></button>
            <button type="button" aria-label="Navigatore" className="mt-1 flex h-8 w-8 items-center justify-center"><Compass /></button>
            <button type="button" aria-label="Funzioni" className="mt-1 flex h-8 w-8 items-center justify-center"><Fx /></button>
          </div>
        </aside>
      </div>

      <div role="toolbar" aria-label="Trova" className="flex h-10 shrink-0 items-center border-t border-b border-[#a0a0a0]">
        <Grip />
        <Tool label="Chiudi"><Cross /></Tool>
        <Combo label="Trova" value="Trova" dim className="ml-px w-[250px]" />
        <Tool label="Precedente"><FindUp /></Tool>
        <Tool label="Successivo"><FindDown /></Tool>
        <button type="button" className="ml-1 whitespace-nowrap">Trova tutto</button>
        <div className="mr-2 ml-2 flex gap-1">
          <Tick id="formatted" first="V" rest="isualizzazione formattata" />
          <Tick id="case" first="M" rest="aiuscole/minuscole" />
        </div>
        <Sep />
        <Tool label="Trova e sostituisci"><FindReplace /></Tool>
        <Chevrons />
      </div>

      <footer className="flex h-5 shrink-0 items-center whitespace-nowrap">
        <span className="w-[128px] pl-2.5">Foglio 1 di 4</span>
        <StatusSep />
        <span className="w-[126px]" />
        <StatusSep />
        <span className="w-[164px] pl-2">PageStyle_survey</span>
        <StatusSep />
        <span className="w-[67px]" />
        <StatusSep />
        <span className="flex w-7 justify-center">
          <svg className="h-3 w-3" viewBox="0 0 12 12"><path d="M0 3.500h8.500v5H0z" fill="#777" /><path d="M9 .5h3M10.500 1v9.500M9 11h3" stroke="#777" /></svg>
        </span>
        <StatusSep />
        <span className="flex w-7 justify-center">
          <svg className="h-3 w-3" viewBox="0 0 12 12" fill="none"><path d="M9.500 8v3.500H.5V.5h6l3 2" stroke="#8a8a8a" /><path d="m3.500 6 2.500 2.500 5-5" stroke="#8a8a8a" strokeWidth="1.500" /></svg>
        </span>
        <StatusSep />
        <span className="w-7" />
        <StatusSep />
        <span className="flex-1 text-center">Media: ; Somma: 0</span>
        <StatusSep />
        <button type="button" aria-label="Riduci" className="flex h-5 w-6 items-center justify-center pl-1.5"><span className="h-0.5 w-2 bg-[#8a8a8a]" /></button>
        <input type="range" aria-label="Zoom" min="0" max="100" defaultValue="50" className="h-4 w-[97px] appearance-none bg-transparent [&::-webkit-slider-runnable-track]:h-[2px] [&::-webkit-slider-runnable-track]:bg-[#a0a0a0] [&::-webkit-slider-thumb]:-mt-[3px] [&::-webkit-slider-thumb]:h-2 [&::-webkit-slider-thumb]:w-2 [&::-webkit-slider-thumb]:appearance-none [&::-webkit-slider-thumb]:rounded-full [&::-webkit-slider-thumb]:border [&::-webkit-slider-thumb]:border-[#777] [&::-webkit-slider-thumb]:bg-white" />
        <button type="button" aria-label="Aumenta" className="flex h-5 w-[21px] items-center justify-center">
          <svg className="h-2 w-2" viewBox="0 0 8 8"><path d="M4 0v8M0 4h8" stroke="#8a8a8a" strokeWidth="2" /></svg>
        </button>
        <StatusSep />
        <span className="w-[45px] pl-2">110%</span>
      </footer>
    </div>
  );
}
